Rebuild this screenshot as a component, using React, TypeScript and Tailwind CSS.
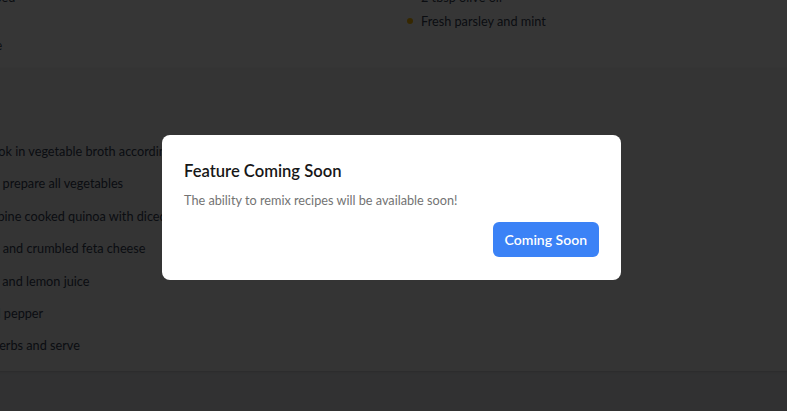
import React from "react";

const ingredients = [
  "1 cup quinoa",
  "2 cups vegetable broth",
  "1/2 cup Kalamata olives",
  "1/2 cup crumbled feta cheese",
  "1 red bell pepper, chopped",
  "2 tbsp olive oil",
  "1 cucumber, diced",
  "Fresh parsley and mint",
  "Salt and pepper, to taste",
];

const steps = [
  "Rinse quinoa and cook in vegetable broth according to package directions",
  "While quinoa cooks, prepare all vegetables",
  "In a large bowl, combine cooked quinoa with diced vegetables",
  "Add Kalamata olives and crumbled feta cheese",
  "Drizzle with olive oil and lemon juice",
  "Season with salt and pepper",
  "Garnish with fresh herbs and serve",
];

const App: React.FC = () => {
  return (
    <div className="relative h-[411px] overflow-hidden bg-gray-200 font-['Lato','Liberation_Sans',sans-serif]">
      {/* page content, scrolled so only part of it shows */}
      <div className="-ml-[171px] w-[1132px]">
        <section className="-mt-[129px] bg-white px-6 pt-6 pb-[13px] shadow-sm">
          <h2 className="h-7 text-lg font-bold text-gray-900">Ingredients</h2>
          <ul className="mt-4 grid grid-cols-2 gap-x-6 gap-y-1">
            {ingredients.map((item) => (
              <li
                key={item}
                className="flex items-center gap-2 whitespace-nowrap text-[12.7px] leading-5 text-gray-700"
              >
                <span className="h-1.5 w-1.5 shrink-0 rounded-full bg-amber-400" />
                {item}
              </li>
            ))}
          </ul>
        </section>

        <section className="bg-gray-100 px-6 pt-6 pb-4 shadow-sm">
          <h2 className="h-7 text-lg font-bold text-gray-900">Instructions</h2>
          <ol className="mt-[21px] flex flex-col gap-[12.4px]">
            {steps.map((step, i) => (
              <li
                key={step}
                className="flex items-center gap-[14px] whitespace-nowrap text-[12.7px] leading-5 text-gray-700"
              >
                <span className="flex h-5 w-5 shrink-0 items-center justify-center rounded-full bg-amber-400 text-[11px] font-bold text-white">
                  {i + 1}
                </span>
                {step}
              </li>
            ))}
          </ol>
        </section>
      </div>

      {/* modal */}
      <div className="absolute inset-0 flex items-center justify-center bg-black/[0.79]">
        <div className="mt-1 mr-1 w-[459px] rounded-lg bg-white px-[22px] pt-6 pb-[23px]">
          <h3 className="text-[16.6px] font-semibold leading-6 text-neutral-900">
            Feature Coming Soon
          </h3>
          <p className="mt-[7px] text-[12.7px] leading-5 text-neutral-500">
            The ability to remix recipes will be available soon!
          </p>
          <div className="mt-3 flex justify-end">
            <button className="h-[35px] rounded-md bg-[#3b82f6] px-3 text-[14px] font-semibold text-white">
              Coming Soon
            </button>
          </div>
        </div>
      </div>
    </div>
  );
};

export default App;
